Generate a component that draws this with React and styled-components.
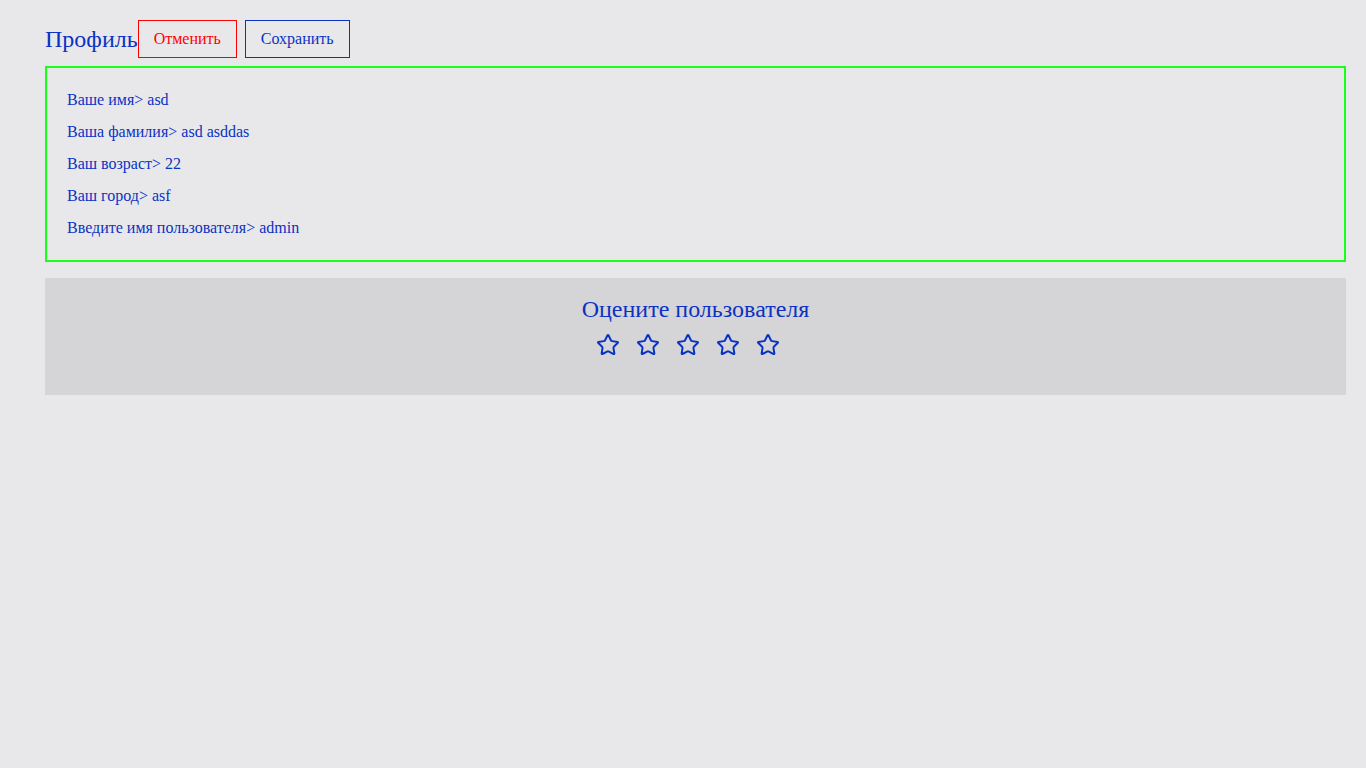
import styled, { createGlobalStyle } from "styled-components";
import { Star } from "lucide-react";

const blue = "#0b32c2";

const GlobalStyle = createGlobalStyle`
  html, body {
    margin: 0;
    background: #e8e8eb;
    font-family: "Liberation Serif", "Times New Roman", serif;
    color: ${blue};
  }
`;

const Page = styled.div`
  padding: 20px 20px 0 45px;
  min-height: 100vh;
  box-sizing: border-box;
`;

const Header = styled.div`
  display: flex;
  align-items: center;
  height: 38px;
`;

const Title = styled.h1`
  margin: 0;
  font-size: 24px;
  font-weight: normal;
  line-height: 28px;
`;

const Button = styled.button`
  height: 38px;
  padding: 0 15px;
  margin-right: 8px;
  background: transparent;
  font-family: inherit;
  font-size: 16px;
  color: ${(p) => (p.$danger ? "#ff0000" : blue)};
  border: 1px solid ${(p) => (p.$danger ? "#ff0000" : blue)};
  cursor: pointer;
`;

const InfoBox = styled.div`
  margin-top: 8px;
  border: 2px solid #1aff1a;
  padding: 22px 20px 22px;
  display: flex;
  flex-direction: column;
  gap: 12px;
`;

const InfoRow = styled.div`
  font-size: 16px;
  line-height: 20px;
`;

const RatePanel = styled.div`
  margin-top: 16px;
  background: #d5d5d8;
  padding: 17px 0 38px;
  display: flex;
  flex-direction: column;
  align-items: center;
  gap: 10px;
`;

const RateTitle = styled.div`
  font-size: 24px;
  line-height: 28px;
`;

const Stars = styled.div`
  display: flex;
  color: ${blue};

  svg {
    margin-right: 16px;
  }
`;

const rows = [
  ["Ваше имя", "asd"],
  ["Ваша фамилия", "asd asddas"],
  ["Ваш возраст", "22"],
  ["Ваш город", "asf"],
  ["Введите имя пользователя", "admin"],
];

export default function App() {
  return (
    <>
      <GlobalStyle />
      <Page>
        <Header>
          <Title>Профиль</Title>
          <Button $danger>Отменить</Button>
          <Button>Сохранить</Button>
        </Header>
        <InfoBox>
          {rows.map(([label, value]) => (
            <InfoRow key={label}>
              {label}&gt; {value}
            </InfoRow>
          ))}
        </InfoBox>
        <RatePanel>
          <RateTitle>Оцените пользователя</RateTitle>
          <Stars>
            {[1, 2, 3, 4, 5].map((n) => (
              <Star key={n} size={24} strokeWidth={2} />
            ))}
          </Stars>
        </RatePanel>
      </Page>
    </>
  );
}
